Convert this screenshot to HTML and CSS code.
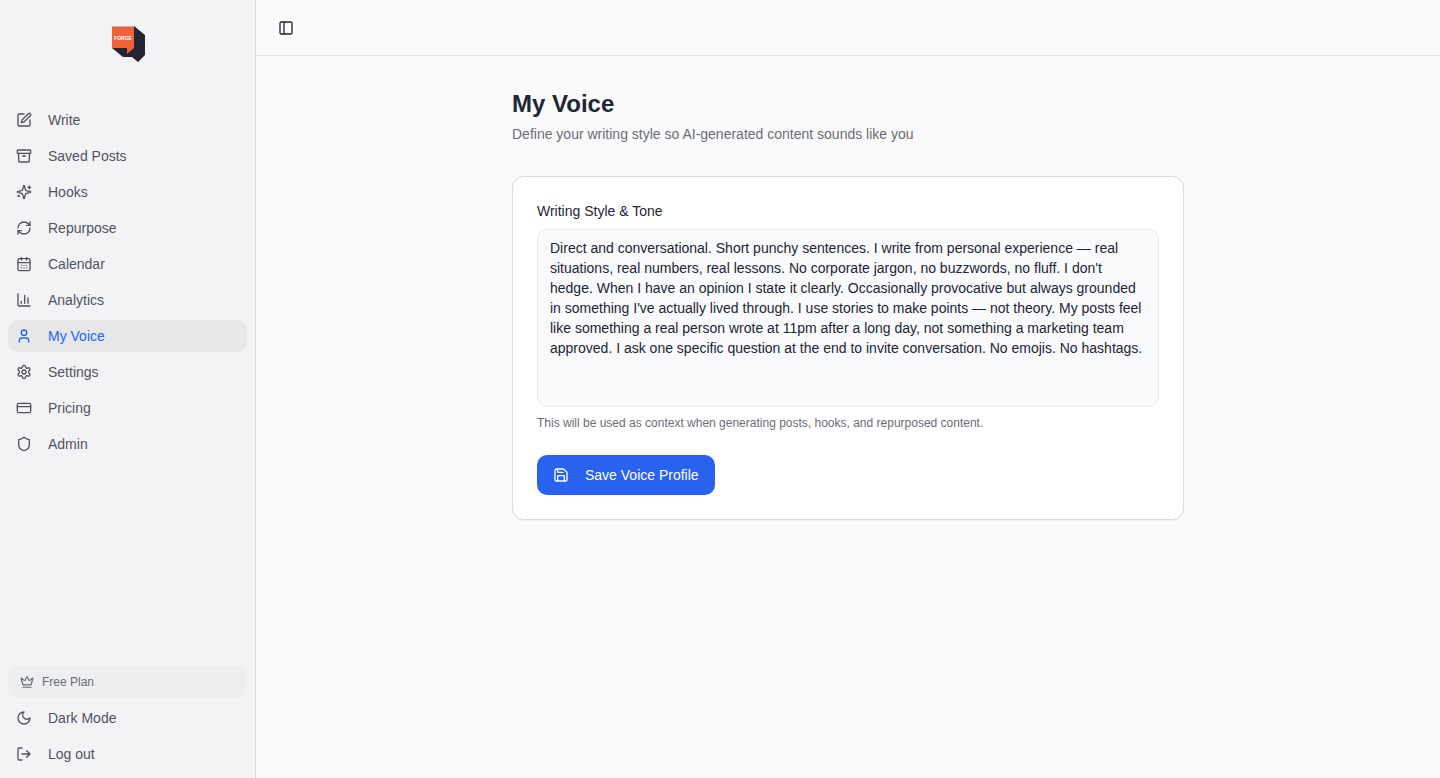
FILE: index.html
```html
<!DOCTYPE html>
<html lang="en">
  <head>
    <meta charset="UTF-8" />
    <meta name="viewport" content="width=device-width, initial-scale=1.0" />
    <title>My Voice - Forge</title>
    <link rel="stylesheet" href="styles.css">
  </head>
  <body>
    <aside class="sidebar">
      <a class="logo" href="#" aria-label="Forge">
        <svg width="40" height="40" viewBox="0 0 40 40">
          <path fill="#222533" d="M26 2 37 11v20l-7 7-6-5h-9L4 24 20 20z" />
          <path fill="#ee6238" d="M4 2h22v22l-7 6v-6H4z" />
          <path stroke="#b9aeb0" d="M4 2.5h22" />
          <text class="logo-text" x="15" y="16" text-anchor="middle">FORGE</text>
        </svg>
      </a>

      <nav class="nav">
        <a class="nav-item" href="#">
          <svg class="icon" viewBox="0 0 24 24"><path d="M12 3H5a2 2 0 0 0-2 2v14a2 2 0 0 0 2 2h14a2 2 0 0 0 2-2v-7" /><path d="M18.375 2.625a1 1 0 0 1 3 3l-9.013 9.014a2 2 0 0 1-.853.505l-2.873.84a.5.5 0 0 1-.62-.62l.84-2.873a2 2 0 0 1 .506-.852z" /></svg>
          <span>Write</span>
        </a>
        <a class="nav-item" href="#">
          <svg class="icon" viewBox="0 0 24 24"><rect x="2" y="3" width="20" height="5" rx="1" /><path d="M4 8v11a2 2 0 0 0 2 2h12a2 2 0 0 0 2-2V8M10 12h4" /></svg>
          <span>Saved Posts</span>
        </a>
        <a class="nav-item" href="#">
          <svg class="icon" viewBox="0 0 24 24"><path d="M9.937 15.5A2 2 0 0 0 8.5 14.063l-6.135-1.582a.5.5 0 0 1 0-.962L8.5 9.936A2 2 0 0 0 9.937 8.5l1.582-6.135a.5.5 0 0 1 .963 0L14.063 8.5A2 2 0 0 0 15.5 9.937l6.135 1.581a.5.5 0 0 1 0 .964L15.5 14.063a2 2 0 0 0-1.437 1.437l-1.582 6.135a.5.5 0 0 1-.963 0z" /><path d="M20 3v4M22 5h-4M4 17v2M5 18H3" /></svg>
          <span>Hooks</span>
        </a>
        <a class="nav-item" href="#">
          <svg class="icon" viewBox="0 0 24 24"><path d="M3 12a9 9 0 0 1 9-9 9.75 9.75 0 0 1 6.74 2.74L21 8" /><path d="M21 3v5h-5M21 12a9 9 0 0 1-9 9 9.75 9.75 0 0 1-6.74-2.74L3 16" /><path d="M8 16H3v5" /></svg>
          <span>Repurpose</span>
        </a>
        <a class="nav-item" href="#">
          <svg class="icon" viewBox="0 0 24 24"><path d="M8 2v4M16 2v4" /><rect x="3" y="4" width="18" height="18" rx="2" /><path d="M3 10h18M8 14h.01M12 14h.01M16 14h.01M8 18h.01M12 18h.01M16 18h.01" /></svg>
          <span>Calendar</span>
        </a>
        <a class="nav-item" href="#">
          <svg class="icon" viewBox="0 0 24 24"><path d="M3 3v16a2 2 0 0 0 2 2h16M18 17V9M13 17V5M8 17v-3" /></svg>
          <span>Analytics</span>
        </a>
        <a class="nav-item active" href="#" aria-current="page">
          <svg class="icon" viewBox="0 0 24 24"><path d="M19 21v-2a4 4 0 0 0-4-4H9a4 4 0 0 0-4 4v2" /><circle cx="12" cy="7" r="4" /></svg>
          <span>My Voice</span>
        </a>
        <a class="nav-item" href="#">
          <svg class="icon" viewBox="0 0 24 24"><path d="M12.22 2h-.44a2 2 0 0 0-2 2v.18a2 2 0 0 1-1 1.73l-.43.25a2 2 0 0 1-2 0l-.15-.08a2 2 0 0 0-2.73.73l-.22.38a2 2 0 0 0 .73 2.73l.15.1a2 2 0 0 1 1 1.72v.51a2 2 0 0 1-1 1.74l-.15.09a2 2 0 0 0-.73 2.73l.22.38a2 2 0 0 0 2.73.73l.15-.08a2 2 0 0 1 2 0l.43.25a2 2 0 0 1 1 1.73V20a2 2 0 0 0 2 2h.44a2 2 0 0 0 2-2v-.18a2 2 0 0 1 1-1.73l.43-.25a2 2 0 0 1 2 0l.15.08a2 2 0 0 0 2.73-.73l.22-.39a2 2 0 0 0-.73-2.73l-.15-.08a2 2 0 0 1-1-1.74v-.5a2 2 0 0 1 1-1.74l.15-.09a2 2 0 0 0 .73-2.73l-.22-.38a2 2 0 0 0-2.73-.73l-.15.08a2 2 0 0 1-2 0l-.43-.25a2 2 0 0 1-1-1.73V4a2 2 0 0 0-2-2z" /><circle cx="12" cy="12" r="3" /></svg>
          <span>Settings</span>
        </a>
        <a class="nav-item" href="#">
          <svg class="icon" viewBox="0 0 24 24"><rect x="2" y="5" width="20" height="14" rx="2" /><path d="M2 10h20" /></svg>
          <span>Pricing</span>
        </a>
        <a class="nav-item" href="#">
          <svg class="icon" viewBox="0 0 24 24"><path d="M20 13c0 5-3.5 7.5-7.66 8.95a1 1 0 0 1-.67-.01C7.5 20.5 4 18 4 13V6a1 1 0 0 1 1-1c2 0 4.5-1.2 6.24-2.72a1.17 1.17 0 0 1 1.52 0C14.51 3.81 17 5 19 5a1 1 0 0 1 1 1z" /></svg>
          <span>Admin</span>
        </a>
      </nav>

      <div class="sidebar-footer">
        <div class="plan">
          <svg class="icon icon-small" viewBox="0 0 24 24"><path d="M11.562 3.266a.5.5 0 0 1 .876 0L15.39 8.87a1 1 0 0 0 1.516.294L21.183 5.5a.5.5 0 0 1 .798.519l-2.834 10.246a1 1 0 0 1-.956.734H5.81a1 1 0 0 1-.957-.734L2.02 6.02a.5.5 0 0 1 .798-.519l4.276 3.664a1 1 0 0 0 1.516-.294z" /><path d="M5 21h14" /></svg>
          <span>Free Plan</span>
        </div>
        <button class="nav-item" type="button">
          <svg class="icon" viewBox="0 0 24 24"><path d="M12 3a6 6 0 0 0 9 9 9 9 0 1 1-9-9" /></svg>
          <span>Dark Mode</span>
        </button>
        <button class="nav-item" type="button">
          <svg class="icon" viewBox="0 0 24 24"><path d="M9 21H5a2 2 0 0 1-2-2V5a2 2 0 0 1 2-2h4M16 17l5-5-5-5M21 12H9" /></svg>
          <span>Log out</span>
        </button>
      </div>
    </aside>

    <div class="page">
      <header class="topbar">
        <button class="toggle" type="button" aria-label="Toggle sidebar">
          <svg class="icon" viewBox="0 0 24 24"><rect x="3" y="3" width="18" height="18" rx="2" /><path d="M9 3v18" /></svg>
        </button>
      </header>

      <main class="content">
        <h1>My Voice</h1>
        <p class="subtitle">Define your writing style so AI-generated content sounds like you</p>

        <form class="card">
          <label for="voice">Writing Style &amp; Tone</label>
          <textarea id="voice" spellcheck="false">Direct and conversational. Short punchy sentences. I write from personal experience — real situations, real numbers, real lessons. No corporate jargon, no buzzwords, no fluff. I don't hedge. When I have an opinion I state it clearly. Occasionally provocative but always grounded in something I've actually lived through. I use stories to make points — not theory. My posts feel like something a real person wrote at 11pm after a long day, not something a marketing team approved. I ask one specific question at the end to invite conversation. No emojis. No hashtags.</textarea>
          <p class="hint">This will be used as context when generating posts, hooks, and repurposed content.</p>
          <button class="save" type="button">
            <svg class="icon" viewBox="0 0 24 24"><path d="M15.2 3a2 2 0 0 1 1.4.6l3.8 3.8a2 2 0 0 1 .6 1.4V19a2 2 0 0 1-2 2H5a2 2 0 0 1-2-2V5a2 2 0 0 1 2-2z" /><path d="M17 21v-7a1 1 0 0 0-1-1H8a1 1 0 0 0-1 1v7M7 3v4a1 1 0 0 0 1 1h7" /></svg>
            <span>Save Voice Profile</span>
          </button>
        </form>
      </main>
    </div>
  </body>
</html>
```

FILE: styles.css
```css
* {
  box-sizing: border-box;
}

body {
  margin: 0;
  display: flex;
  min-height: 100vh;
  font-family: "Liberation Sans", Arial, sans-serif;
  font-size: 14px;
  line-height: 20px;
  color: #222533;
  background-color: #fafafa;
}

h1,
p {
  margin: 0;
}

button,
textarea {
  font: inherit;
}

button {
  border: none;
  cursor: pointer;
}

.icon {
  width: 16px;
  height: 16px;
  flex-shrink: 0;
  fill: none;
  stroke: currentColor;
  stroke-width: 2;
  stroke-linecap: round;
  stroke-linejoin: round;
}

.icon-small {
  width: 14px;
  height: 14px;
}

/* Sidebar */
.sidebar {
  width: 256px;
  flex-shrink: 0;
  display: flex;
  flex-direction: column;
  background-color: #f3f3f6;
  border-right: 1px solid #d9dade;
}

.logo {
  display: flex;
  justify-content: center;
  padding: 24px 0 32px;
}

.logo-text {
  fill: #fff;
  font-size: 5px;
  font-weight: bold;
}

.nav,
.sidebar-footer {
  display: flex;
  flex-direction: column;
  gap: 4px;
  padding: 8px;
}

.sidebar-footer {
  margin-top: auto;
}

.nav-item {
  display: flex;
  align-items: center;
  gap: 16px;
  height: 32px;
  padding: 0 8px;
  border-radius: 10px;
  background-color: transparent;
  color: #50535f;
  text-decoration: none;
}

.nav-item:hover,
.nav-item.active {
  background-color: #e6e7e9;
}

.nav-item.active {
  color: #2862ef;
}

.plan {
  display: flex;
  align-items: center;
  gap: 8px;
  height: 32px;
  padding: 0 12px;
  border-radius: 10px;
  background-color: #edeef0;
  color: #6a6d78;
  font-size: 12px;
}

/* Page */
.page {
  flex: 1;
  min-width: 0;
}

.topbar {
  display: flex;
  align-items: center;
  height: 56px;
  padding: 0 16px;
  border-bottom: 1px solid #e7e7ea;
}

.toggle {
  display: flex;
  align-items: center;
  justify-content: center;
  width: 28px;
  height: 28px;
  padding: 0;
  background: none;
  color: #222533;
}

.content {
  max-width: 672px;
  margin: 0 auto;
  padding: 32px 0;
}

h1 {
  font-size: 24px;
  line-height: 32px;
}

.subtitle {
  margin-top: 4px;
  color: #6a6d78;
}

.card {
  display: flex;
  flex-direction: column;
  align-items: flex-start;
  margin-top: 32px;
  padding: 24px;
  background-color: #fff;
  border: 1px solid #d9dae2;
  border-radius: 12px;
  box-shadow: 0 1px 2px rgba(0, 0, 0, 0.05);
}

textarea {
  display: block;
  width: 100%;
  height: 178px;
  margin-top: 8px;
  padding: 8px 12px;
  border: 1px solid #e7e8eb;
  border-radius: 10px;
  background-color: #f9fafc;
  color: #222533;
  resize: none;
}

textarea:focus {
  outline: none;
  border-color: #2862ef;
}

.hint {
  margin-top: 8px;
  color: #6a6d78;
  font-size: 12px;
  line-height: 16px;
}

.save {
  display: flex;
  align-items: center;
  gap: 16px;
  height: 40px;
  margin-top: 24px;
  padding: 0 16px;
  border-radius: 10px;
  background-color: #2862ef;
  color: #fff;
}

.save:hover {
  background-color: #1f54d6;
}
```
